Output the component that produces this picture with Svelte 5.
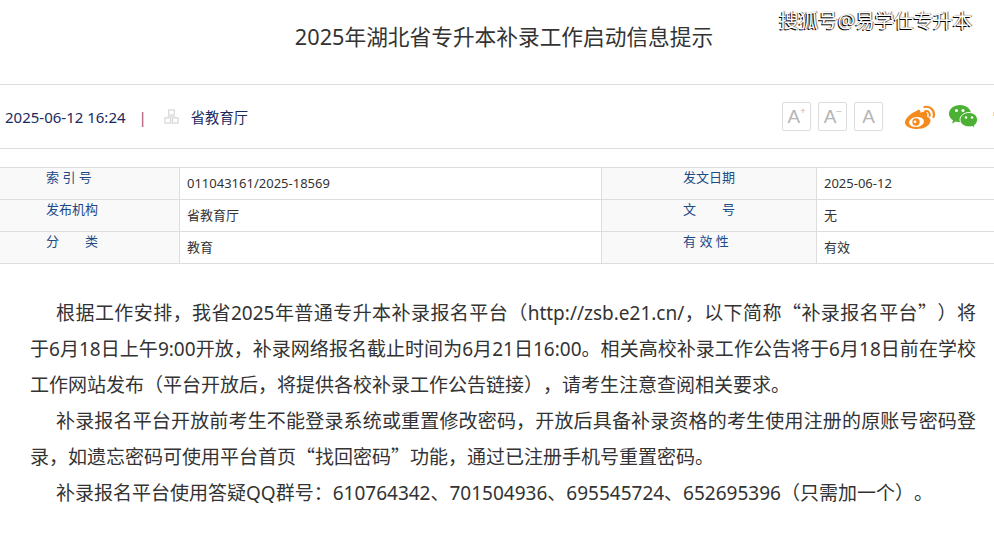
<script>
  const rows = [
    ["索 引 号", "011043161/2025-18569", "发文日期", "2025-06-12"],
    ["发布机构", "省教育厅", "文　　号", "无"],
    ["分　　类", "教育", "有 效 性", "有效"],
  ];
</script>

<div class="page">
  <div class="watermark">搜狐号@易学仕专升本</div>
  <h1 class="title">2025年湖北省专升本补录工作启动信息提示</h1>

  <div class="meta">
    <span class="date">2025-06-12 16:24</span>
    <span class="sep">|</span>
    <svg class="org" width="15" height="15" viewBox="0 0 16 16" fill="none" stroke="#dcdcdc" stroke-width="1.5">
      <rect x="5" y="1" width="6" height="5.5" />
      <rect x="1" y="9.5" width="6" height="5.5" />
      <rect x="9" y="9.5" width="6" height="5.5" />
      <path d="M8 6.5V8.5M4 9.5V8.2H12V9.5" stroke-width="1" />
    </svg>
    <span class="source">省教育厅</span>

    <div class="tools">
      <div class="size"><span>A</span><sup>+</sup></div>
      <div class="size"><span>A</span><sup>–</sup></div>
      <div class="size"><span>A</span></div>

      <svg class="weibo" width="30" height="24" viewBox="0 0 30 24">
        <path fill="#f58a1c" d="M12.500 5.500C7 7.500 0 13 0 17.500 0 21.500 5.500 24 12 24c6.500 0 13.500-3.500 13.500-8.500 0-2.300-2-3.200-3.500-3.700 1-2.800.300-4.800-2.200-5-1.300-.100-3 .400-4.300 1 .300-2.300-.700-3.800-3-2.800z" />
        <ellipse cx="11.500" cy="17" rx="7.500" ry="5" transform="rotate(-8 11.500 17)" fill="#fff" />
        <circle cx="11" cy="17" r="3.700" fill="#f58a1c" />
        <circle cx="10" cy="16.800" r="1.400" fill="#fff" />
        <path d="M20 6.200c3.200-.900 5.300 1.700 4.600 4.700" fill="none" stroke="#f58a1c" stroke-width="2" stroke-linecap="round" />
        <path d="M19.500 2c6.200-1.300 10.800 3.800 9 10" fill="none" stroke="#f58a1c" stroke-width="2.200" stroke-linecap="round" />
      </svg>

      <svg class="wechat" width="29" height="24" viewBox="0 0 29 24">
        <path fill="#4cb034" d="M11 0C5 0 0 3.800 0 8.700c0 2.800 1.600 5 4 6.600l-1 3.200 3.700-1.900c1.400.400 2.800.700 4.300.700 6 0 11-3.800 11-8.600S17 0 11 0z" />
        <path fill="#4cb034" stroke="#fff" stroke-width="1" d="M20 7.500c-5 0-9 3.200-9 7.200s4 7.200 9 7.200c1 0 2-.100 3-.400l3 1.700-.8-2.700c2.300-1.400 3.300-3.500 3.300-5.800 0-4-3.500-7.200-8.500-7.200z" />
        <circle cx="7.500" cy="5.500" r="1.500" fill="#fff" />
        <circle cx="14" cy="5.500" r="1.500" fill="#fff" />
        <circle cx="17" cy="12.500" r="1.200" fill="#fff" />
        <circle cx="23" cy="12.500" r="1.200" fill="#fff" />
      </svg>

      <span class="next"></span>
    </div>
  </div>

  <div class="info">
    {#each rows as row}
      <div class="label">{row[0]}</div>
      <div class="value">{row[1]}</div>
      <div class="label">{row[2]}</div>
      <div class="value">{row[3]}</div>
    {/each}
  </div>

  <div class="content">
    <p>根据工作安排，我省2025年普通专升本补录报名平台（http://zsb.e21.cn/，以下简称<span class="cjk">“</span>补录报名平台<span class="cjk">”</span>）将于6月18日上午9:00开放，补录网络报名截止时间为6月21日16:00。相关高校补录工作公告将于6月18日前在学校工作网站发布（平台开放后，将提供各校补录工作公告链接），请考生注意查阅相关要求。</p>
    <p>补录报名平台开放前考生不能登录系统或重置修改密码，开放后具备补录资格的考生使用注册的原账号密码登录，如遗忘密码可使用平台首页<span class="cjk">“</span>找回密码<span class="cjk">”</span>功能，通过已注册手机号重置密码。</p>
    <p>补录报名平台使用答疑QQ群号：610764342、701504936、695545724、652695396（只需加一个）。</p>
  </div>
</div>

<style>
  :global(body) {
    background: #fff;
    overflow: hidden;
  }

  .page {
    position: relative;
    width: 994px;
    height: 537px;
    overflow: hidden;
    font-family: "Noto Sans", "Noto Sans CJK SC", sans-serif;
    color: #333;
  }

  .watermark {
    position: absolute;
    top: 8px;
    left: 779px;
    font-size: 19.500px;
    line-height: 26px;
    white-space: nowrap;
    color: #fff;
    text-shadow: -1px 1px 0 #000, 1px 0 1px #555;
  }

  .title {
    height: 70px;
    margin: 0;
    border-bottom: 1px solid #ddd;
    display: flex;
    align-items: center;
    justify-content: center;
    padding-bottom: 14px;
    padding-left: 14px;
    font-size: 21.700px;
    font-weight: 400;
  }

  .meta {
    height: 63px;
    border-bottom: 1px solid #ddd;
    display: flex;
    align-items: center;
    padding-left: 5px;
    font-size: 15px;
    color: #1a2a5e;
  }

  .sep {
    margin-left: 13px;
    color: #9a5a75;
  }

  .org {
    margin-left: 17px;
  }

  .source {
    margin-left: 12px;
    font-size: 14.300px;
  }

  .tools {
    margin-left: auto;
    display: flex;
    align-items: center;
    margin-right: -7px;
  }

  .size {
    width: 27px;
    height: 27px;
    margin-right: 7px;
    border: 1px solid #ddd;
    border-radius: 2px;
    display: flex;
    align-items: center;
    justify-content: center;
    color: #b5b5b5;
    font-family: "Liberation Sans", sans-serif;
    font-size: 19px;
    line-height: 1;
  }

  .size sup {
    font-size: 9px;
    margin-top: -10px;
    align-self: center;
  }

  .weibo {
    margin-left: 15px;
  }

  .wechat {
    margin-left: 14px;
  }

  .next {
    width: 8px;
    height: 4px;
    margin-top: -6px;
    margin-left: 15px;
    background: #f8d98c;
  }

  .info {
    margin-top: 18px;
    display: grid;
    grid-template-columns: 180px 421px 216px 177px;
    border-top: 1px solid #ddd;
    width: 994px;
    box-sizing: border-box;
  }

  .label,
  .value {
    height: 32px;
    box-sizing: border-box;
    border-bottom: 1px solid #ddd;
    font-size: 13px;
  }

  .label {
    background: #f9f9f9;
    color: #1c4a86;
    line-height: 18px;
    padding-left: 46px;
    white-space: pre;
  }

  .label:nth-child(4n + 3) {
    border-left: 1px solid #ddd;
    border-right: 1px solid #ddd;
    padding-left: 81px;
  }

  .label:nth-child(4n + 1) {
    border-right: 1px solid #ddd;
  }

  .value {
    padding-left: 7px;
    padding-top: 6px;
    line-height: 18px;
  }

  .content {
    margin: 31px 18px 0 30px;
    font-size: 19px;
    line-height: 36px;
    text-align: justify;
    text-spacing-trim: space-all;
  }

  .content p {
    margin: 0;
    text-indent: 26px;
  }

  .cjk {
    font-family: "Noto Sans CJK SC", sans-serif;
    line-height: 0;
  }
</style>
